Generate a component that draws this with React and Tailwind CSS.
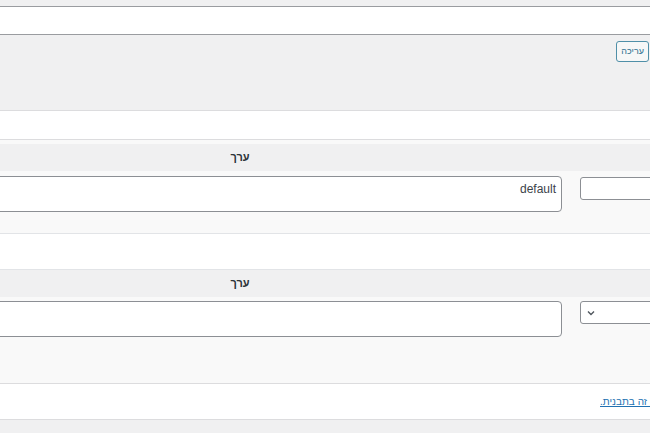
import React from 'react';

const font = { fontFamily: '"Liberation Sans", "DejaVu Sans", sans-serif' };

const Header = () => (
  <div className="flex h-[27px] items-center bg-[#f0f0f1]">
    <div className="ml-[-82px] w-[644px] text-center text-[11px] font-semibold text-[#2c3338]" dir="rtl">
      ערך
    </div>
  </div>
);

const FieldRow = ({ height, top, value, select }) => (
  <div className={`flex items-start gap-[18px] bg-[#f9f9f9] ${height} ${top}`}>
    <textarea
      readOnly
      dir="rtl"
      defaultValue={value}
      className="ml-[-10px] h-[36px] w-[572px] shrink-0 resize-none rounded-[4px] border border-[#8c8f94] bg-white px-[5px] py-[3px] text-[12px] leading-[18px] text-[#3c434a] outline-none"
    />
    {select ? (
      <div className="flex h-[23px] w-[100px] shrink-0 items-center rounded-[3px] border border-[#8c8f94] bg-white pl-[5px]">
        <svg width="10" height="10" viewBox="0 0 10 10" fill="none">
          <path d="M2 3.5 L5 6.5 L8 3.5" stroke="#50575e" strokeWidth="1.4" />
        </svg>
      </div>
    ) : (
      <div className="mt-[1px] h-[23px] w-[100px] shrink-0 rounded-[3px] border border-[#8c8f94] bg-white" />
    )}
  </div>
);

export default function App() {
  return (
    <div className="h-[433px] w-[650px] overflow-hidden bg-[#f0f0f1]" style={font}>
      <div className="h-[7px] border-b border-[#9a9ca0] bg-[#f0f0f1]" />
      <div className="h-[28px] border-b border-[#9a9ca0] bg-white" />
      <div className="flex h-[76px] justify-end border-b border-[#dcdcde] bg-[#f0f0f1] pt-[6px] pr-[1px]">
        <button className="h-[21px] rounded-[3px] border border-[#4f8fa8] bg-[#f6f7f7] px-[4px] text-[9px] leading-none text-[#2a6f8f]" dir="rtl">
          עריכה
        </button>
      </div>
      <div className="h-[29px] border-b border-[#dcdcde] bg-white" />
      <div className="h-[4px] bg-[#f9f9f9]" />
      <Header />
      <FieldRow height="h-[62px]" top="pt-[5px]" value="default" />
      <div className="h-[37px] border-y border-[#e2e4e7] bg-white" />
      <Header />
      <FieldRow height="h-[86px]" top="pt-[4px]" value="" select />
      <div className="flex h-[37px] items-center whitespace-nowrap border-y border-[#dcdcde] bg-white pl-[600px]">
        <a href="#" dir="rtl" className="text-[10px] text-[#2271b1] underline">
          למידע נוסף על שימוש בתוכן זה בתבנית.
        </a>
      </div>
      <div className="h-[14px] bg-[#f0f0f1]" />
    </div>
  );
}
